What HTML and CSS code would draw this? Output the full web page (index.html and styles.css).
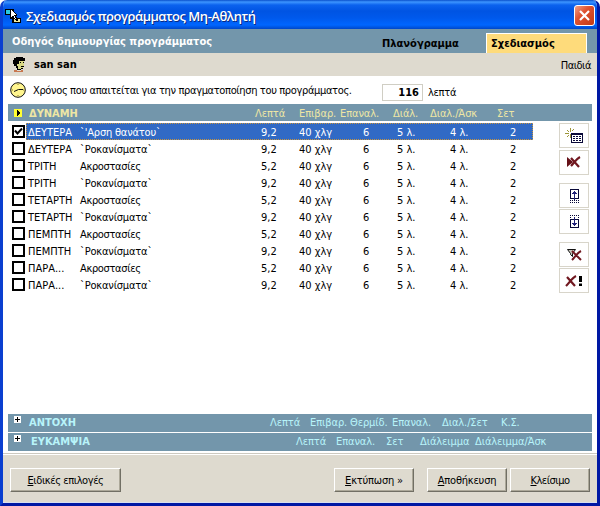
FILE: index.html
```
<!DOCTYPE html>
<html lang="el">
<head>
<meta charset="utf-8">
<title>Σχεδιασμός προγράμματος</title>
<link rel="stylesheet" href="styles.css">
</head>
<body>
<div class="window">
  <header class="titlebar">
    <svg class="app-icon" width="17" height="17" viewBox="0 0 17 17" shape-rendering="crispEdges">
      <path fill="#000" d="M0 2h9v6H0zM7 11h9v5H7z"/><path fill="#29c7df" d="M1 3h7v4H1z"/><path fill="#efe9a2" d="M9 12h6v3H9z"/>
      <path fill="#000" d="M5 2h2v1h1v1h1v1h1v1h1v1h1v2h-1v1h1v2h1v2h-2v-1h-1v-2H8v1H5z"/><path fill="#fff" d="M6 3v7h1V9h2v2h1v1h1v-1h-1V9H9V8h2V7h-1V6H9V5H8V4H7V3z"/>
    </svg>
    <h1>Σχεδιασμός προγράμματος Μη-Αθλητή</h1>
    <div class="close"><svg width="13" height="13" viewBox="0 0 13 13"><path d="M2 2l9 9M11 2l-9 9" stroke="#fff" stroke-width="2.200"/></svg></div>
  </header>
  <nav class="tabs">
    <span class="wizard">Οδηγός δημιουργίας προγράμματος</span>
    <span class="tab">Πλανόγραμμα</span>
    <span class="tab active">Σχεδιασμός</span>
  </nav>
  <section class="user">
    <svg width="13" height="16" viewBox="0 0 13 16" shape-rendering="crispEdges">
      <path fill="#000" d="M3 0h7v1h2v3h-1v6h-1v2H8v1H4v-2H3V9H1V7H0V3h1V1h2z"/>
      <path fill="#d8d984" d="M6 4h5v5h-1v2H8v1H5v-3H4V7h2z"/><path fill="#000" d="M7 5h1v1H7zM10 5h1v1h-1zM8 9h2v1H8z"/>
      <path fill="#c8774f" d="M1 13h3v1h4v-1h2v2H1z"/>
    </svg>
    <b>san san</b><span class="group">Παιδιά</span>
  </section>
  <main>
    <div class="duration">
      <svg width="16" height="16" viewBox="0 0 16 16"><circle cx="8" cy="8" r="7.300" fill="#fff58e" stroke="#111"/><path d="M13 7.500H8.500L4 9.500" stroke="#111" fill="none"/><path d="M8 2v1M8 13v1M2 8h1M13 8h1" stroke="#877d28"/></svg>
      <span class="question">Χρόνος που απαιτείται για την πραγματοποίηση του προγράμματος.</span>
      <span class="minutes">116</span><span>λεπτά</span>
    </div>
    <div class="bar strength">
      <svg width="8" height="8" viewBox="0 0 8 8" shape-rendering="crispEdges"><path fill="#ff3" d="M0 0h8v8H0z"/><path d="M3 1h1v1h1v1h1v2H5v1H4v1H3z"/></svg>
      <b>ΔΥΝΑΜΗ</b><span>Λεπτά</span><span>Επιβαρ.</span><span>Επαναλ.</span><span>Διάλ.</span><span>Διαλ./Άσκ</span><span>Σετ</span>
    </div>
    <div class="workspace">
      <div class="list">
        <div class="row selected"><i class="check"><svg width="9" height="9" viewBox="0 0 9 9"><path d="M1 3.500l2.500 3L8 1.500" fill="none" stroke="#000" stroke-width="2"/></svg></i><div class="cells"><span>ΔΕΥΤΕΡΑ</span><span class="name quoted">`'Αρση θανάτου`</span><span>9,2</span><span>40 χλγ</span><span>6</span><span>5 λ.</span><span>4 λ.</span><span>2</span></div></div>
        <div class="row"><i class="check"></i><div class="cells"><span>ΔΕΥΤΕΡΑ</span><span class="name quoted">`Ροκανίσματα`</span><span>9,2</span><span>40 χλγ</span><span>6</span><span>5 λ.</span><span>4 λ.</span><span>2</span></div></div>
        <div class="row"><i class="check"></i><div class="cells"><span>ΤΡΙΤΗ</span><span class="name">Ακροστασίες</span><span>5,2</span><span>40 χλγ</span><span>6</span><span>5 λ.</span><span>4 λ.</span><span>2</span></div></div>
        <div class="row"><i class="check"></i><div class="cells"><span>ΤΡΙΤΗ</span><span class="name quoted">`Ροκανίσματα`</span><span>9,2</span><span>40 χλγ</span><span>6</span><span>5 λ.</span><span>4 λ.</span><span>2</span></div></div>
        <div class="row"><i class="check"></i><div class="cells"><span>ΤΕΤΑΡΤΗ</span><span class="name">Ακροστασίες</span><span>5,2</span><span>40 χλγ</span><span>6</span><span>5 λ.</span><span>4 λ.</span><span>2</span></div></div>
        <div class="row"><i class="check"></i><div class="cells"><span>ΤΕΤΑΡΤΗ</span><span class="name quoted">`Ροκανίσματα`</span><span>9,2</span><span>40 χλγ</span><span>6</span><span>5 λ.</span><span>4 λ.</span><span>2</span></div></div>
        <div class="row"><i class="check"></i><div class="cells"><span>ΠΕΜΠΤΗ</span><span class="name">Ακροστασίες</span><span>5,2</span><span>40 χλγ</span><span>6</span><span>5 λ.</span><span>4 λ.</span><span>2</span></div></div>
        <div class="row"><i class="check"></i><div class="cells"><span>ΠΕΜΠΤΗ</span><span class="name quoted">`Ροκανίσματα`</span><span>9,2</span><span>40 χλγ</span><span>6</span><span>5 λ.</span><span>4 λ.</span><span>2</span></div></div>
        <div class="row"><i class="check"></i><div class="cells"><span>ΠΑΡΑ...</span><span class="name">Ακροστασίες</span><span>5,2</span><span>40 χλγ</span><span>6</span><span>5 λ.</span><span>4 λ.</span><span>2</span></div></div>
        <div class="row"><i class="check"></i><div class="cells"><span>ΠΑΡΑ...</span><span class="name quoted">`Ροκανίσματα`</span><span>9,2</span><span>40 χλγ</span><span>6</span><span>5 λ.</span><span>4 λ.</span><span>2</span></div></div>
      </div>
      <aside class="tools">
        <div class="tool"><svg width="18" height="16" viewBox="0 0 18 16" shape-rendering="crispEdges"><path d="M5.500 0v4M5.500 6v4M0 5.500h4M7 5.500h3M2 2l2 2M9 1L7 3M2 9l2-2" stroke="#9d9639" fill="none"/><path fill="#fff" stroke="#080838" d="M6.500 5.500h11v9h-11z"/><path fill="#080838" d="M6 5h12v2H6zM8 8h2v1H8zM11 8h2v1h-2zM14 8h2v1h-2zM8 10h2v1H8zM11 10h2v1h-2zM14 10h2v1h-2zM8 12h2v1H8zM11 12h2v1h-2zM14 12h2v1h-2z"/></svg></div>
        <div class="tool"><svg width="16" height="14" viewBox="0 0 16 14"><path fill="#651018" d="M1 1l6 5-6 5z"/><path d="M5 2l8 9M14 1c-4 2-6 6-9 9" stroke="#711820" stroke-width="2.200" fill="none"/></svg></div>
        <div class="tool gap"><svg width="11" height="14" viewBox="0 0 11 14" shape-rendering="crispEdges"><path fill="none" stroke="#080838" d="M1.500 .5h8v9h-8z"/><path fill="#202078" d="M5 2h1v1h1v1h1v1H6v6H5V5H3V4h1V3h1z"/><path fill="#080838" d="M1 11h1v1H1zM3 11h1v1H3zM5 11h1v1H5zM7 11h1v1H7zM9 11h1v1H9zM1 13h1v1H1zM3 13h1v1H3zM5 13h1v1H5zM7 13h1v1H7zM9 13h1v1H9z"/></svg></div>
        <div class="tool"><svg width="11" height="14" viewBox="0 0 11 14" shape-rendering="crispEdges"><path fill="none" stroke="#080838" d="M1.500 4.500h8v8h-8z"/><path fill="#202078" d="M5 2h1v6h2v1H7v1H6v1H5v-1H4V9H3V8h2z"/><path fill="#080838" d="M1 0h1v1H1zM3 0h1v1H3zM5 0h1v1H5zM7 0h1v1H7zM9 0h1v1H9zM1 2h1v1H1zM9 2h1v1H9z"/></svg></div>
        <div class="tool gap"><svg width="16" height="14" viewBox="0 0 16 14"><path fill="#c8c8bd" stroke="#111" d="M1.500 1.500h8l-3 4v3l-2-2v-1z"/><path d="M6 3l9 9M15 3c-4 2-6 6-9 9" stroke="#711820" stroke-width="2" fill="none"/></svg></div>
        <div class="tool"><svg width="18" height="14" viewBox="0 0 18 14"><path d="M2 3l8 9M11 2C7 4 5 8 1 12" stroke="#711820" stroke-width="2.200" fill="none"/><path fill="#000" d="M14 2h3v6h-3zM14 9.500h3v2.500h-3z"/></svg></div>
      </aside>
    </div>
    <div class="bar endurance"><i class="plus"></i><b>ΑΝΤΟΧΗ</b><span>Λεπτά</span><span>Επιβαρ.</span><span>Θερμίδ.</span><span>Επαναλ.</span><span>Διαλ./Σετ</span><span>Κ.Σ.</span></div>
    <div class="bar flexibility"><i class="plus"></i><b>ΕΥΚΑΜΨΙΑ</b><span>Λεπτά</span><span>Επαναλ.</span><span>Σετ</span><span>Διάλειμμα</span><span>Διάλειμμα/Άσκ</span></div>
  </main>
  <footer>
    <button class="special"><span><u>Ε</u>ιδικές επιλογές</span></button>
    <button class="print"><span><u>Ε</u>κτύπωση »</span></button>
    <button class="save"><span><u>Α</u>ποθήκευση</span></button>
    <button class="exit"><span><u>Κ</u>λείσιμο</span></button>
  </footer>
</div>
</body>
</html>
```
FILE: styles.css
```
* { box-sizing: border-box; }
body { margin: 0; background: #fff; }
.window {
  width: 600px; height: 506px; overflow: hidden;
  display: flex; flex-direction: column;
  border: 3px solid #0a3fd0; border-top: 0; border-right-color: #0018a4; border-bottom-color: #0018a4;
  border-radius: 7px 7px 0 0;
  background: #fff;
  font: 11px/17px "DejaVu Sans Condensed", "DejaVu Sans", sans-serif; color: #000;
  white-space: nowrap;
}
.titlebar {
  height: 29px; flex: none; margin: 0 -3px; padding: 2px 5px 0;
  display: flex; align-items: center;
  background: linear-gradient(#0a50cc 0, #3d95ff 2px, #0b62ee 5px, #0054e3 11px, #0059ec 18px, #0066ff 25px, #0047c8 29px);
}
.app-icon { margin: -1px 4px 0 0; }
h1 { margin: 0; font: 600 13px/20px "Open Sans", "Noto Sans", sans-serif; color: #fff; letter-spacing: -.48px; text-shadow: 1px 1px 0 #0a2a80; }
.close { margin-left: auto; width: 21px; height: 21px; display: grid; place-items: center; border: 1px solid #fff; border-radius: 3px; background: linear-gradient(135deg, #f0a088, #df5230 40%, #c33a14); }
.tabs { height: 24px; flex: none; display: flex; padding-left: 9px; background: #7396ab; font-weight: bold; line-height: 25px; color: #000; }
.wizard { color: #fff; width: 370px; }
.tab { width: 104px; line-height: 29px; }
.tab.active { width: 101px; height: 20px; margin-top: 4px; padding-left: 4px; line-height: 20px; background: #fedb7b; border: 1px solid #fff; border-bottom: 0; }
.user { height: 23px; flex: none; display: flex; align-items: center; padding: 0 6px 0 10px; background: #dedacf; }
.user b { margin-left: 8px; }
.group { margin-left: auto; letter-spacing: -.5px; padding-top: 1px; }
main { height: 378px; flex: none; padding: 0 5px; }
.duration { height: 28px; display: flex; align-items: center; padding-left: 2px; }
.question { width: 349px; margin-left: 7px; letter-spacing: -.36px; }
.minutes { width: 41px; height: 17px; margin: 5px 5px 0 0; padding-right: 3px; border: 1px solid #d0cec4; font-weight: bold; text-align: right; line-height: 16px; }
.duration .minutes + span { margin-top: 4px; letter-spacing: -.3px; }
.bar { display: grid; height: 18px; background: #7396ab; color: #b8f4fa; line-height: 17px; }
.bar span { letter-spacing: -.1px; }
.bar b { font-size: 11px; }
.strength { height: 17px; line-height: 19px; grid-template-columns: 21px 226px 44px 41px 53px 37px 67px 1fr; color: #eee6a4; }
.strength svg { margin: 5px 0 0 6px; }
.workspace { height: 293px; padding: 2px 0 0 4px; display: flex; }
.list { width: 521px; }
.row { display: flex; height: 17px; align-items: center; }
.check { width: 13px; height: 13px; margin-right: 1px; border: 2px solid #000; background: #fff; display: block; }
.check svg { display: block; }
.cells { width: 507px; height: 17px; display: grid; grid-template-columns: 52px 181px 38px 64px 34px 53px 60px 1fr; padding-left: 2px; line-height: 19px; }
.name { letter-spacing: -.35px; }
.quoted { letter-spacing: -.2px; }
.selected .cells { background: #316ac5; color: #fff; outline: 1px dotted #c8953f; outline-offset: -1px; }
.tools { margin-left: 26px; }
.tool { width: 30px; height: 25px; margin-bottom: 1px; border: 1px solid #d8d5ca; display: grid; place-items: center; }
.tool:nth-child(2) { margin-top: 2px; }
.tool.gap { margin-top: 8px; }
.endurance { grid-template-columns: 21px 241px 40px 40px 42px 50px 59px 1fr; margin-bottom: 1px; }
.flexibility { grid-template-columns: 23px 265px 40px 50px 34px 55px 1fr; }
.plus { width: 7px; height: 7px; margin: 2px 0 0 6px; background: linear-gradient(#000, #000) 50% 50% / 5px 1px no-repeat, linear-gradient(#000, #000) 50% 50% / 1px 5px no-repeat, #fff; }
footer { flex: 1; display: flex; padding: 13px 7px 0; background: #dedacf; border-top: 1px solid #fff; box-shadow: 0 -1px #ccc9c0; border-bottom: 1px solid #d7dff0; }
button { width: 80px; height: 24px; padding: 0; border: 1px solid; border-color: #fff #716f64 #716f64 #fff; background: #dedacf; box-shadow: inset -1px -1px #aca899; font: inherit; color: #000; letter-spacing: -.2px; }
.special { width: 111px; margin-right: auto; letter-spacing: -.42px; }
.print { margin-right: 13px; }
.save { margin-right: 3px; }
.exit { letter-spacing: -.5px; }
```
